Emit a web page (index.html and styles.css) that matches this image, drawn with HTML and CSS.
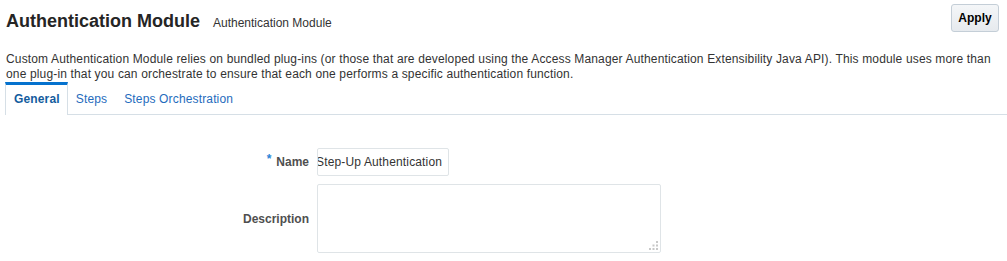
FILE: index.html
```html
<!DOCTYPE html>
<html>
<head>
<meta charset="utf-8">
<link rel="stylesheet" href="styles.css">
</head>
<body>
<div class="header">
  <div class="titles">
    <h1 class="title">Authentication Module</h1>
    <span class="subtitle">Authentication Module</span>
  </div>
  <button class="apply">Apply</button>
</div>
<p class="intro">Custom Authentication Module relies on bundled plug-ins (or those that are developed using the Access Manager Authentication Extensibility Java API). This module uses more than one plug-in that you can orchestrate to ensure that each one performs a specific authentication function.</p>
<div class="tabs">
  <div class="tab active">General</div>
  <div class="tab">Steps</div>
  <div class="tab">Steps Orchestration</div>
</div>
<div class="form">
  <div class="label"><span class="req">*</span>Name</div>
  <div class="field"><div class="input"><span class="val">Step-Up Authentication</span></div></div>
  <div class="label">Description</div>
  <div class="field">
    <div class="textarea">
      <svg class="grip" width="9" height="9" viewBox="0 0 9 9">
        <rect x="7" y="0" width="2" height="2" fill="#c8c8c8"/>
        <rect x="3.5" y="3.5" width="2" height="2" fill="#c8c8c8"/>
        <rect x="7" y="3.5" width="2" height="2" fill="#c8c8c8"/>
        <rect x="0" y="7" width="2" height="2" fill="#c8c8c8"/>
        <rect x="3.5" y="7" width="2" height="2" fill="#c8c8c8"/>
        <rect x="7" y="7" width="2" height="2" fill="#c8c8c8"/>
      </svg>
    </div>
  </div>
</div>
</body>
</html>
```

FILE: styles.css
```css
html, body {
  margin: 0;
  padding: 0;
  background: #fff;
  font-family: "Liberation Sans", Arial, sans-serif;
  font-size: 12px;
  color: #333;
}
.header {
  display: flex;
  justify-content: space-between;
  align-items: flex-start;
  padding: 4px 8px 0 6px;
}
.titles {
  display: flex;
  align-items: baseline;
  gap: 13px;
  margin-top: 6px;
}
.title {
  margin: 0;
  font-size: 18px;
  font-weight: bold;
  line-height: 22px;
  color: #252525;
}
.subtitle {
  font-size: 12px;
  color: #333;
}
.apply {
  width: 48px;
  height: 28px;
  font-family: "Liberation Sans", Arial, sans-serif;
  font-size: 12px;
  font-weight: bold;
  color: #000;
  background: linear-gradient(#f4f6f8, #e6eaee);
  border: 1px solid #c4ced7;
  border-radius: 3px;
  padding: 0;
}
.intro {
  margin: 20px 12px 0 6px;
  line-height: 15px;
  letter-spacing: 0.15px;
}
.tabs {
  display: flex;
  margin: 0 0 0 5px;
  border-bottom: 1px solid #d6dfe6;
  border-top-right-radius: 4px;
}
.tab {
  padding: 7px 9px 7px 8px;
  border-top: 3px solid transparent;
  line-height: 15px;
  letter-spacing: 0.15px;
  color: #1f6cbd;
}
.tab.active {
  font-weight: bold;
  color: #145c9e;
  border-top-color: #0572ce;
  border-left: 1px solid #d6dfe6;
  border-right: 1px solid #d6dfe6;
  background: #fff;
  margin-bottom: -1px;
  padding-bottom: 8px;
  padding-left: 8px;
  padding-right: 7px;
}
.form {
  display: grid;
  grid-template-columns: 309px auto;
  column-gap: 8px;
  row-gap: 8px;
  margin-top: 33px;
  align-items: center;
}
.label {
  text-align: right;
  font-weight: bold;
  color: #4f4f4f;
}
.req {
  color: #2a84d6;
  font-weight: bold;
  font-size: 12px;
  position: relative;
  top: -3px;
  margin-right: 5px;
}
.field {
  display: flex;
}
.input {
  width: 130px;
  height: 26px;
  border: 1px solid #dfe4e7;
  border-radius: 2px;
  overflow: hidden;
  white-space: nowrap;
  line-height: 26px;
  color: #333;
}
.val {
  display: inline-block;
  margin-left: -2px;
  letter-spacing: 0.15px;
}
.textarea {
  position: relative;
  width: 342px;
  height: 67px;
  border: 1px solid #dfe4e7;
  border-radius: 2px;
}
.grip {
  position: absolute;
  right: 2px;
  bottom: 2px;
}
```
